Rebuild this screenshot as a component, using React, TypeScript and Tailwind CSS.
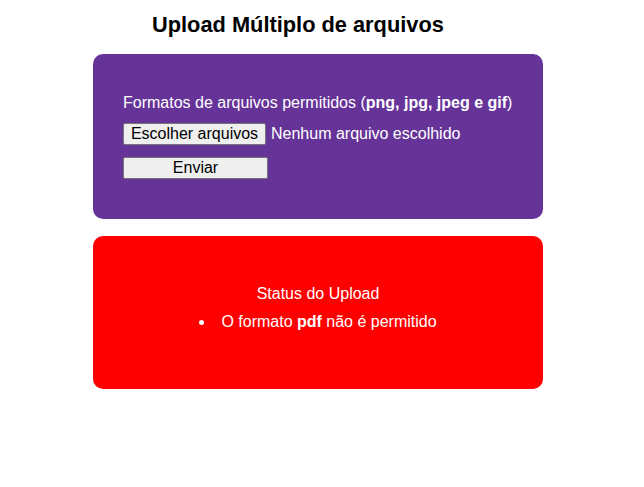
export default function App() {
  return (
    <div className="w-full min-h-[487px] bg-white font-['Liberation_Sans',Arial,sans-serif]">
      <div className="ml-[93px] w-[450px] pt-[12px]">
        <h2 className="pl-[59px] text-[21.8px] leading-[25px] font-bold text-black">
          Upload Múltiplo de arquivos
        </h2>

        {/* Upload form */}
        <form className="mt-[17px] rounded-[10px] bg-[#663399] px-[30px] pt-[40px] pb-[40px] text-[16px] leading-[18px] text-white">
          <p>
            Formatos de arquivos permitidos (<b>png, jpg, jpeg e gif</b>)
          </p>
          <div className="mt-[11px] flex items-center">
            <span className="flex h-[22px] w-[143px] items-center justify-center rounded-[2px] border border-[#767676] bg-[#efefef] text-black">
              Escolher arquivos
            </span>
            <span className="ml-[5px]">Nenhum arquivo escolhido</span>
          </div>
          <button
            type="button"
            className="mt-[12px] flex h-[22px] w-[145px] items-center justify-center rounded-[2px] border border-[#767676] bg-[#efefef] text-black"
          >
            Enviar
          </button>
        </form>

        {/* Status */}
        <div className="mt-[17px] rounded-[10px] bg-[#ff0000] pt-[49px] pb-[58px] text-[16px] leading-[18px] text-white">
          <p className="text-center">Status do Upload</p>
          <ul className="mt-[10px] flex justify-center">
            <li className="flex items-center">
              <span className="h-[5px] w-[5px] rounded-full bg-white" />
              <span className="ml-[17px]">
                O formato <b>pdf</b> não é permitido
              </span>
            </li>
          </ul>
        </div>
      </div>
    </div>
  );
}
